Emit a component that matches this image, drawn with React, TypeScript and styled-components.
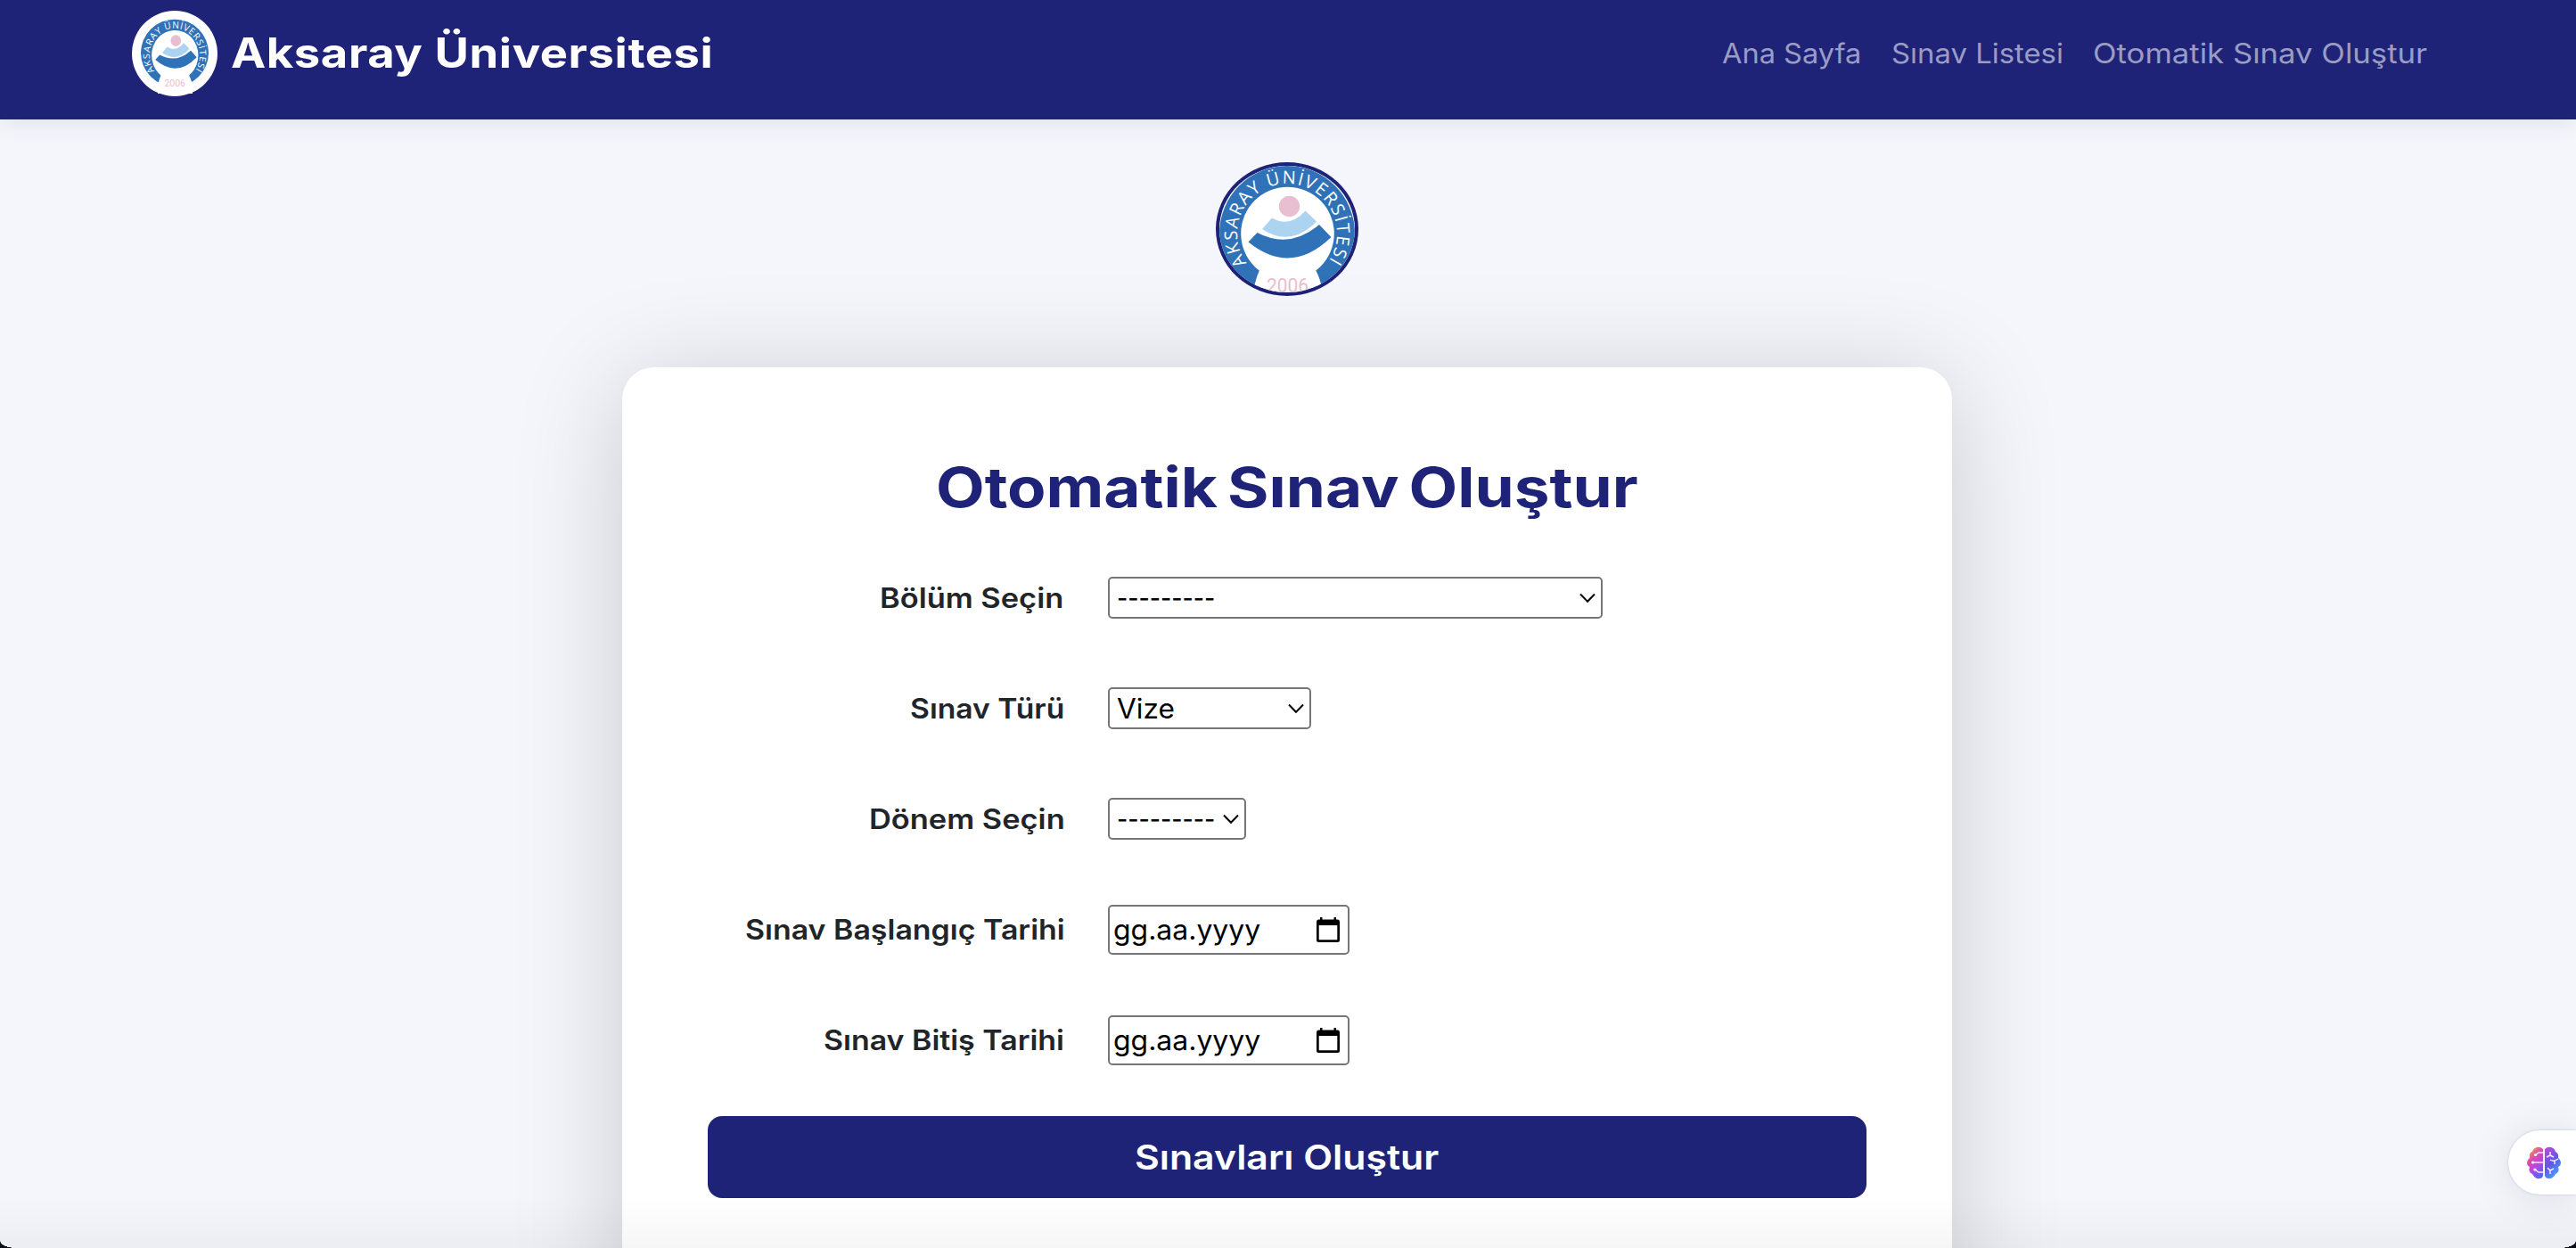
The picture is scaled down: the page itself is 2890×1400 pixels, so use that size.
import React from "react";
import styled, { createGlobalStyle } from "styled-components";

const navy = "#1e2378";

const Global = createGlobalStyle`
  * { box-sizing: border-box; }
  body { margin: 0; background: #f4f6fb; font-family: Inter, sans-serif; color: #212529; }
`;

const Page = styled.div`
  position: relative;
  height: 1400px;
  overflow: hidden;
  display: flex;
  flex-direction: column;
  align-items: center;
  background: #f4f6fb;
`;

const Header = styled.header`
  width: 100%;
  height: 134px;
  flex: none;
  display: flex;
  justify-content: space-between;
  padding: 12px 167px 0 148px;
  background: ${navy};
  box-shadow: 0 4px 24px rgba(31, 60, 120, 0.1);
`;

const Brand = styled.div`
  display: flex;
  align-items: center;
  height: 96px;
  gap: 15px;
`;

const BrandMark = styled.div`
  width: 96px;
  height: 96px;
  padding: 7px 8px 0;
  border-radius: 50%;
  background: #fff;
`;

const Text = styled.span<{
  $size: number;
  $width: number;
  $stretch: number;
  $weight?: number;
  $track?: number;
  $wordGap?: number;
  $color?: string;
}>`
  display: block;
  flex: none;
  width: ${(p) => p.$width}px;
  white-space: nowrap;
  text-align: left;
  font-size: ${(p) => p.$size}px;
  font-weight: ${(p) => p.$weight ?? 400};
  letter-spacing: ${(p) => p.$track ?? 0}px;
  word-spacing: ${(p) => p.$wordGap ?? 0}px;
  line-height: 1.2;
  color: ${(p) => p.$color ?? "inherit"};
  transform: scaleX(${(p) => p.$stretch});
  transform-origin: left center;
`;

const Nav = styled.nav`
  display: flex;
  align-items: center;
  height: 96px;
  gap: 34px;
`;

const Emblem = styled.div`
  width: 160px;
  height: 150px;
  margin: 48px 2px 0 0;
  flex: none;
  border: 4px solid ${navy};
  border-radius: 50%;
  overflow: hidden;
  background: #fff;
`;

const Card = styled.main`
  width: 1492px;
  height: 1100px;
  flex: none;
  margin: 80px 2px 0 0;
  padding: 91px 96px 0;
  border-radius: 36px;
  background: #fff;
  box-shadow: 0 16px 122px rgba(0, 0, 0, 0.18);
`;

const Title = styled.h1`
  margin: 0 0 40px;
  height: 89px;
  display: flex;
  align-items: center;
  justify-content: center;
`;

const Row = styled.div`
  display: grid;
  grid-template-columns: 400px 1fr;
  column-gap: 49px;
  align-items: center;
  height: 76px;
  margin-bottom: 48px;
`;

const Label = styled.label`
  display: flex;
  justify-content: flex-end;
  padding-top: 2px;
`;

const Field = styled.div<{ $w: number }>`
  display: flex;
  align-items: center;
  justify-content: space-between;
  width: ${(p) => p.$w}px;
  height: 47px;
  padding: 1px 6px 0 8px;
  border: 2px solid #767676;
  border-radius: 5px;
  background: #fff;
  color: #000;

  svg { flex: none; }
`;

const DateField = styled(Field)`
  height: 56px;
  margin-top: 2px;
  padding: 0 9px 1px 4px;
`;

const Submit = styled.button`
  display: flex;
  align-items: center;
  justify-content: center;
  width: 100%;
  height: 92px;
  margin-top: 1px;
  padding: 1px 0 0;
  border: 0;
  border-radius: 16px;
  background: ${navy};
  font-family: inherit;
`;

const Assistant = styled.div`
  position: absolute;
  right: 0;
  top: 1268px;
  width: 76px;
  height: 72px;
  display: flex;
  align-items: center;
  padding-left: 21px;
  border-radius: 36px 0 0 36px;
  background: #fff;
  box-shadow: 0 4px 48px rgba(20, 20, 60, 0.1), 0 0 3px rgba(60, 40, 90, 0.2);
`;

const BottomShade = styled.div`
  position: absolute;
  left: 0;
  right: 0;
  bottom: 0;
  height: 60px;
  background: linear-gradient(rgba(0, 0, 0, 0), rgba(0, 0, 0, 0.035));
`;

const WindowCorner = styled.div<{ $side: "left" | "right" }>`
  position: absolute;
  bottom: 0;
  ${(p) => p.$side}: 0;
  width: 18px;
  height: 8px;
  background: radial-gradient(
    ellipse 18px 8px at ${(p) => (p.$side === "left" ? "100%" : "0")} 0,
    transparent 97%,
    #0b0f19 100%
  );
`;

type SealProps = { id: string; width: number; height: number; viewBox: string; ringHeight: number; ringY: number };

function Seal({ id, width, height, viewBox, ringHeight, ringY }: SealProps) {
  return (
    <svg width={width} height={height} viewBox={viewBox} preserveAspectRatio="none" display="block">
      <defs>
        <path id={id} d="M34.700 112.900 A56 56 0 1 1 119.600 119.600" />
      </defs>
      <ellipse cx="80" cy={ringY} rx="76" ry={ringHeight} fill="#2f72b7" />
      <circle cx="80.500" cy="80" r="52.300" fill="#fff" />
      <path d="M49 121 Q45 130 42 144 V160 H120 V144 Q117 130 112 121Z" fill="#fff" />
      <text fontFamily="Open Sans, sans-serif" fontSize="20" fill="#fff">
        <textPath href={`#${id}`} textLength="243" lengthAdjust="spacing">AKSARAY ÜNİVERSİTESİ</textPath>
      </text>
      <circle cx="82.500" cy="49.500" r="11.700" fill="#e8bfd1" />
      <path d="M63 62.500 Q83 74 100.500 54.500 L113 66.500 Q84 96 52 75Z" fill="#acd3ef" />
      <path d="M46.500 79 Q83 98 116 70 L129.500 84 Q84 128 36.500 89.500Z" fill="#2f72b7" />
      <text x="57" y="145.500" textLength="47" lengthAdjust="spacingAndGlyphs" fontFamily="Roboto, sans-serif" fontSize="22" fill="#e8bfd1">2006</text>
    </svg>
  );
}

const Chevron = () => (
  <svg width="18" height="12" viewBox="0 0 18 12" fill="none" stroke="#000" strokeWidth="2">
    <path d="M1 1.500 L9 9.700 L17 1.500" />
  </svg>
);

const Calendar = () => (
  <svg width="26" height="28" viewBox="0 0 26 28">
    <path
      fillRule="evenodd"
      d="M4 0h2.500v2.500h13V0H22v2.500h1.500q2.500 0 2.500 3v20q0 2.500-2.500 2.500h-21Q0 28 0 25.500v-20q0-3 2.500-3H4Zm-1.300 9v16.300h20.600V9Z"
    />
  </svg>
);

const Brain = () => (
  <svg width="38" height="37" viewBox="0 0 38 37">
    <defs>
      <linearGradient id="brainLeft" x1="0.3" y1="0" x2="0.8" y2="1">
        <stop offset="0" stopColor="#f0a13c" />
        <stop offset="0.32" stopColor="#dc48b8" />
        <stop offset="0.62" stopColor="#b348e2" />
        <stop offset="1" stopColor="#4a68f0" />
      </linearGradient>
      <linearGradient id="brainRight" x1="0.2" y1="0" x2="0.7" y2="1">
        <stop offset="0" stopColor="#b44bdc" />
        <stop offset="0.5" stopColor="#6057e8" />
        <stop offset="1" stopColor="#45adfa" />
      </linearGradient>
    </defs>
    <path fill="url(#brainLeft)" d="M18 3 Q15 0 11 1 Q7 2 6 6 Q2 7 3 13 Q0 15 0 18 Q0 22 3 23 Q1 29 6 31 Q9 37 14 36 Q17 36 18 33Z" />
    <path fill="url(#brainRight)" d="M20 3 Q23 0 27 1 Q31 2 32 6 Q36 8 35 13 Q38 15 38 18 Q38 22 35 23 Q37 29 32 31 Q29 37 24 36 Q21 36 20 33Z" />
    <g fill="none" stroke="#f6e6ff" strokeWidth="1.500">
      <path d="M18 7h-5l-3 2.500M18 18H7M18 29h-5l-4-3" />
      <path d="M26 6v4l-4 2M26 10l4 2M26 15q4 3 9-1M31 16v4M23 24l3 3 4-2M26 27v4" />
    </g>
    <g fill="#fff">
      <circle cx="9.500" cy="9.500" r="1.600" />
      <circle cx="6.500" cy="18" r="1.600" />
      <circle cx="9" cy="26" r="1.600" />
    </g>
  </svg>
);

const links = [
  { text: "Ana Sayfa", width: 156, stretch: 1.05 },
  { text: "Sınav Listesi", width: 192, stretch: 1.06 },
  { text: "Otomatik Sınav Oluştur", width: 375, stretch: 1.12 },
];

const selects = [
  { label: "Bölüm Seçin", labelWidth: 207, stretch: 1.11, value: "---------", width: 555, valueWidth: 108, valueStretch: 0.86 },
  { label: "Sınav Türü", labelWidth: 173, stretch: 1.085, value: "Vize", width: 228, valueWidth: 65, valueStretch: 1.02 },
  { label: "Dönem Seçin", labelWidth: 219, stretch: 1.11, value: "---------", width: 155, valueWidth: 108, valueStretch: 0.86 },
];

const dates = [
  { label: "Sınav Başlangıç Tarihi", labelWidth: 358, stretch: 1.094 },
  { label: "Sınav Bitiş Tarihi", labelWidth: 270, stretch: 1.094 },
];

export default function App() {
  return (
    <Page>
      <Global />
      <Header>
        <Brand>
          <BrandMark>
            <Seal id="brandArc" width={80} height={86} viewBox="0 0 160 160" ringY={75} ringHeight={70} />
          </BrandMark>
          <Text $size={46.5} $weight={740} $width={542} $stretch={1.13} $track={0.5} $color="#fff">
            Aksaray Üniversitesi
          </Text>
        </Brand>
        <Nav>
          {links.map((l) => (
            <Text key={l.text} $size={31} $width={l.width} $stretch={l.stretch} $color="#9a9cc4">{l.text}</Text>
          ))}
        </Nav>
      </Header>
      <Emblem>
        <Seal id="emblemArc" width={152} height={142} viewBox="4 4 152 142" ringY={80} ringHeight={76} />
      </Emblem>
      <Card>
        <Title>
          <Text $size={62} $weight={720} $width={789} $stretch={1.145} $track={0} $wordGap={-5} $color={navy}>
            Otomatik Sınav Oluştur
          </Text>
        </Title>
        {selects.map((s) => (
          <Row key={s.label}>
            <Label>
              <Text $size={31} $weight={600} $width={s.labelWidth} $stretch={s.stretch}>{s.label}</Text>
            </Label>
            <Field $w={s.width}>
              <Text $size={31} $width={s.valueWidth} $stretch={s.valueStretch}>{s.value}</Text>
              <Chevron />
            </Field>
          </Row>
        ))}
        {dates.map((d) => (
          <Row key={d.label}>
            <Label>
              <Text $size={31} $weight={600} $width={d.labelWidth} $stretch={d.stretch}>{d.label}</Text>
            </Label>
            <DateField $w={271}>
              <Text $size={31} $width={165} $stretch={1.03}>gg.aa.yyyy</Text>
              <Calendar />
            </DateField>
          </Row>
        ))}
        <Submit>
          <Text $size={38.5} $weight={600} $width={343} $stretch={1.11} $color="#fff">Sınavları Oluştur</Text>
        </Submit>
      </Card>
      <BottomShade />
      <Assistant>
        <Brain />
      </Assistant>
      <WindowCorner $side="left" />
      <WindowCorner $side="right" />
    </Page>
  );
}
